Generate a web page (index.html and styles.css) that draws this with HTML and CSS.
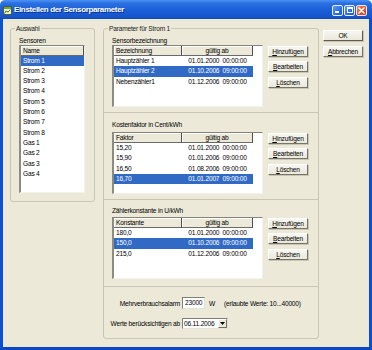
FILE: index.html
```html
<!DOCTYPE html>
<html lang="de">
<head>
<meta charset="utf-8">
<title>Einstellen der Sensorparameter</title>
<link rel="stylesheet" href="styles.css">
</head>
<body>
<div class="window">
  <div class="titlebar">
    <svg class="app-icon" width="9" height="9" viewBox="0 0 9 9">
      <rect x="0.5" y="0.5" width="8" height="8" fill="#f4f0c8" stroke="#4a5a3a"/>
      <rect x="1" y="1" width="7" height="2" fill="#6aa84f"/>
      <polyline points="1.5,7.5 3,5 5,6 7.5,3.5" fill="none" stroke="#2e7d32" stroke-width="1"/>
    </svg>
    <span class="title">Einstellen der Sensorparameter</span>
    <div class="caption-buttons">
      <span class="cap cap-min"><span class="cap-min-bar"></span></span>
      <span class="cap cap-max"><span class="cap-max-box"></span></span>
      <span class="cap cap-close">
        <svg width="9" height="9" viewBox="0 0 9 9"><path d="M2 2 L7 7 M7 2 L2 7" stroke="#fff" stroke-width="1.6" stroke-linecap="round"/></svg>
      </span>
    </div>
  </div>
  <div class="frame">
    <div class="client">
      <fieldset class="group group-select">
        <legend>Auswahl</legend>
        <div class="caption caption-sensors">Sensoren</div>
        <div class="listview list-sensors">
          <div class="lv-head"><span class="hcell hcell-full">Name</span></div>
          <div class="lv-row sel"><span class="cell">Strom 1</span></div>
          <div class="lv-row"><span class="cell">Strom 2</span></div>
          <div class="lv-row"><span class="cell">Strom 3</span></div>
          <div class="lv-row"><span class="cell">Strom 4</span></div>
          <div class="lv-row"><span class="cell">Strom 5</span></div>
          <div class="lv-row"><span class="cell">Strom 6</span></div>
          <div class="lv-row"><span class="cell">Strom 7</span></div>
          <div class="lv-row"><span class="cell">Strom 8</span></div>
          <div class="lv-row"><span class="cell">Gas 1</span></div>
          <div class="lv-row"><span class="cell">Gas 2</span></div>
          <div class="lv-row"><span class="cell">Gas 3</span></div>
          <div class="lv-row"><span class="cell">Gas 4</span></div>
        </div>
      </fieldset>

      <fieldset class="group group-params">
        <legend>Parameter für Strom 1</legend>

        <section class="sect sect-1">
          <div class="caption">Sensorbezeichnung</div>
          <div class="sect-body">
            <div class="listview list-params">
              <div class="lv-head"><span class="hcell c1">Bezeichnung</span><span class="hcell c2">gültig ab</span></div>
              <div class="lv-row"><span class="cell c1">Hauptzähler 1</span><span class="cell c2">01.01.2000&nbsp;&nbsp;00:00:00</span></div>
              <div class="lv-row sel"><span class="cell c1">Hauptzähler 2</span><span class="cell c2">01.10.2006&nbsp;&nbsp;09:00:00</span></div>
              <div class="lv-row"><span class="cell c1">Nebenzähler1</span><span class="cell c2">01.12.2006&nbsp;&nbsp;09:00:00</span></div>
            </div>
            <div class="btn-col">
              <button class="btn"><u>H</u>inzufügen</button>
              <button class="btn"><u>B</u>earbeiten</button>
              <button class="btn"><u>L</u>öschen</button>
            </div>
          </div>
        </section>

        <section class="sect sect-2">
          <div class="caption">Kostenfaktor in Cent/kWh</div>
          <div class="sect-body">
            <div class="listview list-params">
              <div class="lv-head"><span class="hcell c1">Faktor</span><span class="hcell c2">gültig ab</span></div>
              <div class="lv-row"><span class="cell c1">15,20</span><span class="cell c2">01.01.2000&nbsp;&nbsp;00:00:00</span></div>
              <div class="lv-row"><span class="cell c1">15,90</span><span class="cell c2">01.01.2006&nbsp;&nbsp;09:00:00</span></div>
              <div class="lv-row"><span class="cell c1">16,50</span><span class="cell c2">01.08.2006&nbsp;&nbsp;09:00:00</span></div>
              <div class="lv-row sel"><span class="cell c1">16,70</span><span class="cell c2">01.01.2007&nbsp;&nbsp;09:00:00</span></div>
            </div>
            <div class="btn-col">
              <button class="btn"><u>H</u>inzufügen</button>
              <button class="btn"><u>B</u>earbeiten</button>
              <button class="btn"><u>L</u>öschen</button>
            </div>
          </div>
        </section>

        <section class="sect sect-3">
          <div class="caption">Zählerkonstante in U/kWh</div>
          <div class="sect-body">
            <div class="listview list-params">
              <div class="lv-head"><span class="hcell c1">Konstante</span><span class="hcell c2">gültig ab</span></div>
              <div class="lv-row"><span class="cell c1">180,0</span><span class="cell c2">01.01.2000&nbsp;&nbsp;00:00:00</span></div>
              <div class="lv-row sel"><span class="cell c1">150,0</span><span class="cell c2">01.10.2006&nbsp;&nbsp;09:00:00</span></div>
              <div class="lv-row"><span class="cell c1">215,0</span><span class="cell c2">01.12.2006&nbsp;&nbsp;09:00:00</span></div>
            </div>
            <div class="btn-col">
              <button class="btn"><u>H</u>inzufügen</button>
              <button class="btn"><u>B</u>earbeiten</button>
              <button class="btn"><u>L</u>öschen</button>
            </div>
          </div>
        </section>

        <section class="sect sect-4">
          <div class="form-grid">
            <span class="form-label">Mehrverbrauchsalarm</span>
            <div class="form-ctrl">
              <span class="textbox">23000</span>
              <span class="unit">W</span>
              <span class="hint">(erlaubte Werte: 10...40000)</span>
            </div>
            <span class="form-label">Werte berücksichtigen ab</span>
            <div class="form-ctrl">
              <span class="combo"><span class="combo-text">06.11.2006</span><span class="combo-btn"><svg width="5" height="3" viewBox="0 0 5 3"><path d="M0 0 H5 L2.5 3 Z" fill="#000"/></svg></span></span>
            </div>
          </div>
        </section>
      </fieldset>

      <div class="dlg-buttons">
        <button class="btn btn-default">OK</button>
        <button class="btn"><u>A</u>bbrechen</button>
      </div>
    </div>
  </div>
</div>
</body>
</html>
```

FILE: styles.css
```css
* { box-sizing: border-box; }
html, body { margin: 0; padding: 0; background: #ffffff; }
body {
  font-family: "Liberation Sans", Arial, sans-serif;
  font-size: 6.6px;
  letter-spacing: -0.2px;
  color: #000;
}

.window {
  width: 372px;
  height: 350px;
  display: flex;
  flex-direction: column;
  overflow: hidden;
}

/* ---------- title bar ---------- */
.titlebar {
  height: 19px;
  flex: none;
  display: flex;
  align-items: center;
  padding: 0 5px 0 3px;
  background: linear-gradient(#4a93f5 0%, #2a6ee0 18%, #1a5fd8 55%, #1656cc 85%, #0f4bbd 100%);
  border-radius: 5px 5px 0 0;
}
.app-icon { flex: none; margin-right: 2px; margin-top: 1px; }
.title {
  flex: 1;
  color: #fff;
  font-weight: bold;
  font-size: 8px;
  letter-spacing: -0.35px;
  text-shadow: 1px 1px 0 #0a2f8a;
  white-space: nowrap;
}
.caption-buttons { display: flex; gap: 1px; margin-top: 1px; }
.cap {
  width: 11px;
  height: 11px;
  border: 1px solid #e8f0ff;
  border-radius: 2px;
  background: linear-gradient(135deg, #5a9cff 0%, #2a6de8 60%, #1d58d0 100%);
  display: flex;
  align-items: center;
  justify-content: center;
}
.cap-min { align-items: flex-end; justify-content: flex-start; padding: 0 0 2px 2px; }
.cap-min-bar { width: 4px; height: 2px; background: #fff; }
.cap-max-box { width: 6px; height: 6px; border: 1px solid #fff; border-top-width: 2px; }
.cap-close { background: linear-gradient(135deg, #f08a60 0%, #e0522a 55%, #c8401c 100%); }

/* ---------- frame ---------- */
.frame {
  flex: 1;
  display: flex;
  border-left: 3px solid #0a50d4;
  border-right: 3px solid #0a50d4;
  border-bottom: 3px solid #0a48c4;
}
.client {
  flex: 1;
  background: #ece9d8;
  display: flex;
  align-items: flex-start;
  padding: 5px 0 0 7px;
}

/* ---------- group boxes ---------- */
.group {
  margin: 0;
  padding: 0 8px;
  border: 1px solid #c9c6b6;
  border-radius: 3px;
  min-width: 0;
}
.group legend {
  margin-left: -4px;
  padding: 0 1px;
  line-height: 9px;
  color: #1a1a1a;
}
.group-select { width: 85px; height: 178px; }
.group-params { width: 216px; height: 315px; margin-left: 8px; }

.caption { line-height: 9px; height: 9px; white-space: nowrap; }
.caption-sensors { margin-top: 2.5px; }

/* ---------- list views ---------- */
.listview {
  background: #fff;
  border-style: solid;
  border-width: 1px 1px 1px 2px;
  border-color: #85847c #f2f1ea #f2f1ea #8d8c84;
  overflow: hidden;
}
.lv-head { display: flex; height: 10px; }
.hcell {
  height: 10px;
  line-height: 9px;
  background: #ece9d8;
  border-right: 1px solid #4f4f4f;
  border-bottom: 1px solid #6a6a6a;
  box-shadow: inset 1px 1px #ffffff;
  padding-left: 2px;
  white-space: nowrap;
}
.hcell-full { width: 100%; }
.hcell.c2 { text-align: center; padding-left: 0; }
.lv-row { display: flex; height: 10.33px; line-height: 10.33px; }
.lv-row.sel { background: #316ac5; color: #fff; }
.cell { padding-left: 2px; white-space: nowrap; }
.c1 { width: 68px; flex: none; }
.c2 { width: 71px; flex: none; text-align: center; }
.cell.c2 { padding-left: 0; }
.list-sensors { width: 66px; height: 148px; }
.list-params { width: 151px; height: 62px; flex: none; }
.list-params .lv-row { width: 139px; }

/* ---------- sections ---------- */
.sect {
  margin: 0 -8px;
  padding: 0 8px;
  border-bottom: 1px solid #c9c6b6;
}
.sect-1 { height: 80px; padding-top: 2.5px; }
.sect-2 { height: 87px; padding-top: 6.5px; }
.sect-3 { height: 87px; padding-top: 5.5px; }
.sect-4 { border-bottom: 0; padding: 10px 0 0 3px; }
.sect-1 .caption { margin-bottom: 0.5px; }
.sect-2 .caption { margin-bottom: 3.5px; }
.sect-3 .caption { margin-bottom: 2.5px; }
.sect-body { display: flex; gap: 5px; align-items: flex-start; }
.btn-col { display: flex; flex-direction: column; gap: 4.5px; margin-top: 0.5px; }

/* ---------- buttons ---------- */
.btn {
  width: 40px;
  height: 11px;
  padding: 0;
  margin: 0;
  font: inherit;
  letter-spacing: inherit;
  line-height: 9px;
  color: #000;
  background: linear-gradient(#f7f6f0, #ebe8da);
  border: 1px solid;
  border-color: #ffffff #77756a #77756a #ffffff;
  box-shadow: 1px 1px 0 #c9c6b6;
  text-align: center;
  white-space: nowrap;
}
.btn u { text-decoration: underline; text-underline-offset: 1px; }
.btn-default { border-color: #ffffff #5e5c52 #5e5c52 #ffffff; }
.dlg-buttons {
  display: flex;
  flex-direction: column;
  gap: 5px;
  margin: 6px 0 0 4px;
}

/* ---------- bottom form ---------- */
.form-grid {
  display: grid;
  grid-template-columns: 73px auto;
  column-gap: 2px;
  row-gap: 9px;
  align-items: center;
}
.form-label { text-align: right; white-space: nowrap; }
.form-ctrl { display: flex; align-items: center; white-space: nowrap; }
.textbox {
  width: 23px;
  height: 12px;
  line-height: 10px;
  background: #fff;
  border: 1px solid;
  border-color: #7f7f78 #e4e2d8 #e4e2d8 #7f7f78;
  padding-left: 2px;
}
.unit { margin-left: 4px; }
.hint { margin-left: 9px; }
.combo {
  width: 46px;
  height: 11px;
  display: flex;
  background: #fff;
  border: 1px solid;
  border-color: #7f7f78 #e4e2d8 #e4e2d8 #7f7f78;
}
.combo-text { flex: 1; line-height: 9px; padding-left: 1px; }
.combo-btn {
  width: 9px;
  height: 9px;
  background: #ece9d8;
  border: 1px solid;
  border-color: #fff #6f6d64 #6f6d64 #fff;
  display: flex;
  align-items: center;
  justify-content: center;
}
```
